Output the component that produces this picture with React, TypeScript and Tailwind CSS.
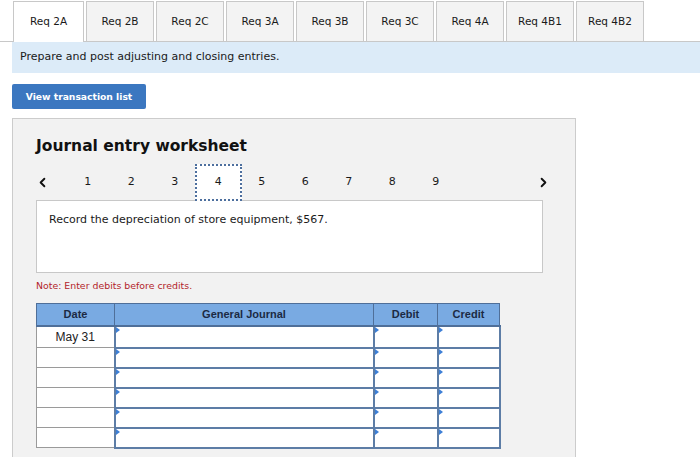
import { ChevronLeft, ChevronRight } from 'lucide-react';

const tabs = ['Req 2A', 'Req 2B', 'Req 2C', 'Req 3A', 'Req 3B', 'Req 3C', 'Req 4A', 'Req 4B1', 'Req 4B2'];
const pages = [1, 2, 3, 4, 5, 6, 7, 8, 9];
const rows = ['May 31', '', '', '', '', ''];

function InputCell() {
  return (
    <td className="relative border-2 border-[#5d7da6] bg-white p-0">
      {/* little blue marker in the corner */}
      <span className="absolute left-0 top-0 h-0 w-0 border-y-[3px] border-l-[4px] border-y-transparent border-l-[#3d7fd6]" />
    </td>
  );
}

export default function App() {
  return (
    <div className="relative h-[457px] w-[700px] overflow-hidden bg-white font-['DejaVu_Sans',Verdana,sans-serif] text-[#1a1a1a]">
      {/* Tabs */}
      <div className="flex gap-[2px] border-b border-[#c8c8c8] pl-[13px] pt-[1px]">
        {tabs.map((t, i) => (
          <div
            key={t}
            className={
              i === 0
                ? '-mb-px flex h-[41px] w-[71px] items-center justify-center border border-b-0 border-[#c8c8c8] bg-white text-[10.5px]'
                : 'flex h-[40px] w-[68px] items-center justify-center border border-b-0 border-[#c8c8c8] bg-[#f3f3f3] text-[10.5px]'
            }
          >
            {t}
          </div>
        ))}
      </div>

      {/* Instructions band */}
      <div className="ml-[12px] flex h-[31px] items-center bg-[#dcebf8] pl-[8px] text-[11px]">
        Prepare and post adjusting and closing entries.
      </div>

      <button className="ml-[12px] mt-[11px] flex h-[25px] w-[134px] items-center justify-center rounded-[2px] bg-[#3b77c0] text-[9.2px] font-bold text-white">
        View transaction list
      </button>

      {/* Worksheet panel */}
      <div className="ml-[12px] mt-[9px] h-[360px] w-[564px] border border-[#cccccc] bg-[#f2f2f2] pl-[23px] pt-[17px]">
        <h2 className="text-[15.5px] font-bold leading-[20px] text-[#111]">Journal entry worksheet</h2>

        <div className="mt-[8px] flex h-[37px] w-[514px] items-center text-[11px]">
          <ChevronLeft className="ml-[-1px] h-[15px] w-[15px] text-[#111]" strokeWidth={3} />
          <div className="ml-[16px] flex items-center">
            {pages.map((p) =>
              p === 4 ? (
                <div
                  key={p}
                  className="mx-[-1.75px] flex h-[37px] w-[47px] items-center justify-center border-2 border-dotted border-[#4d6f9e] bg-white"
                >
                  {p}
                </div>
              ) : (
                <div key={p} className="flex h-[37px] w-[43.5px] items-center justify-center">
                  {p}
                </div>
              )
            )}
          </div>
          <ChevronRight className="ml-auto mr-[-1px] h-[15px] w-[15px] text-[#111]" strokeWidth={3} />
        </div>

        <div className="-mt-px h-[73px] w-[507px] border border-[#c8c8c8] bg-white pl-[12px] pt-[11px] text-[11px]">
          Record the depreciation of store equipment, $567.
        </div>

        <p className="mt-[6px] text-[9.4px] text-[#b3242b]">Note: Enter debits before credits.</p>

        <table className="mt-[10px] w-[463px] table-fixed border-collapse font-['Liberation_Sans',Arial,sans-serif]">
          <colgroup>
            <col className="w-[78px]" />
            <col className="w-[259px]" />
            <col className="w-[64px]" />
            <col className="w-[62px]" />
          </colgroup>
          <thead>
            <tr className="h-[22px] bg-[#79aae2] text-[11px] font-bold text-[#1c2a44]">
              <th className="border border-[#4f6f99] border-b-2 font-bold">Date</th>
              <th className="border border-[#4f6f99] border-b-2 font-bold">General Journal</th>
              <th className="border border-[#4f6f99] border-b-2 font-bold">Debit</th>
              <th className="border border-[#4f6f99] border-b-2 font-bold">Credit</th>
            </tr>
          </thead>
          <tbody>
            {rows.map((d, i) => (
              <tr key={i} className={i === 0 ? 'h-[22px]' : 'h-[20px]'}>
                <td className="border border-[#9a9a9a] bg-white p-0 text-center text-[12px] text-[#222]">{d}</td>
                <InputCell />
                <InputCell />
                <InputCell />
              </tr>
            ))}
          </tbody>
        </table>
      </div>
    </div>
  );
}
